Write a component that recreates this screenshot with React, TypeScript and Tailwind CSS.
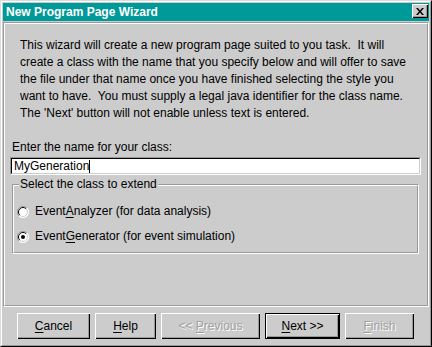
import type { ReactNode } from 'react'

const raised =
  'shadow-[inset_1px_1px_0_#ffffff,inset_-1px_-1px_0_#000000,inset_-2px_-2px_0_#999999]'

function Ul({ children }: { children: ReactNode }) {
  return <span className="underline underline-offset-[2px]">{children}</span>
}

function Radio({ checked }: { checked?: boolean }) {
  return (
    <svg width="12" height="12" viewBox="0 0 12 12" className="shrink-0">
      <circle cx="6" cy="6" r="5.5" fill="#ffffff" />
      <path d="M10 2 A5.5 5.5 0 0 0 2 10" fill="none" stroke="#999999" strokeWidth="1" />
      <path d="M9.2 2.8 A4.5 4.5 0 0 0 2.8 9.2" fill="none" stroke="#000000" strokeWidth="1" />
      <path d="M2 10 A5.5 5.5 0 0 0 10 2" fill="none" stroke="#ffffff" strokeWidth="1" />
      <path d="M2.8 9.2 A4.5 4.5 0 0 0 9.2 2.8" fill="none" stroke="#cccccc" strokeWidth="1" />
      {checked && <circle cx="6" cy="6" r="2" fill="#000000" />}
    </svg>
  )
}

function Button({
  children,
  width,
  disabled,
  isDefault,
}: {
  children: ReactNode
  width: string
  disabled?: boolean
  isDefault?: boolean
}) {
  return (
    <div
      className={`${width} h-[26px] ${isDefault ? 'border border-black' : ''} bg-[#cccccc]`}
    >
      <div
        className={`h-full w-full flex items-center justify-center ${raised} ${
          disabled ? 'text-[#a0a0a0] [text-shadow:1px_1px_0_#ffffff]' : 'text-black'
        }`}
      >
        {children}
      </div>
    </div>
  )
}

export default function App() {
  return (
    <div className="w-[432px] h-[347px] bg-[#cccccc] border border-t-[#dcdcdc] border-l-[#dcdcdc] border-r-black border-b-black font-['Liberation_Sans',Arial,sans-serif] text-[12px] leading-[17px] text-black">
      <div className="h-full flex flex-col border border-t-white border-l-white border-r-[#999999] border-b-[#999999] p-px">
        {/* title bar */}
        <div className="h-[18px] shrink-0 bg-[#009999] flex items-center justify-between pl-[3px] pr-px">
          <span className="text-white font-bold text-[12px]">New Program Page Wizard</span>
          <div className={`w-[16px] h-[14px] mb-[2px] bg-[#cccccc] flex items-center justify-center ${raised}`}>
            <svg width="8" height="7" viewBox="0 0 8 7">
              <path d="M0 0h2l2 2.5L6 0h2L5 3.5 8 7H6L4 4.5 2 7H0l3-3.5z" fill="#000000" />
            </svg>
          </div>
        </div>

        {/* main panel */}
        <div className="mt-px h-[285px] shrink-0 border border-t-[#999999] border-l-[#999999] border-r-white border-b-white">
          <div className="h-full border border-t-white border-l-white border-r-[#999999] border-b-[#999999] flex flex-col">
            <p className="mt-[13px] pl-[15px] whitespace-pre">
              {'This wizard will create a new program page suited to you task.  It will\n'}
              {'create a class with the name that you specify below and will offer to save\n'}
              {'the file under that name once you have finished selecting the style you\n'}
              {'want to have.  You must supply a legal java identifier for the class name.\n'}
              {"The 'Next' button will not enable unless text is entered."}
            </p>

            <div className="mt-[17px] pl-[7px]">Enter the name for your class:</div>

            <div className="mt-px ml-[5px] w-[411px] h-[18px] bg-white border border-t-[#999999] border-l-[#999999] border-r-white border-b-white">
              <div className="h-full border border-t-black border-l-black border-r-[#cccccc] border-b-[#cccccc] pl-[2px] flex items-center leading-[14px]">
                MyGeneration
                <span className="w-px h-[13px] bg-black" />
              </div>
            </div>

            {/* group box */}
            <div className="relative mt-[9px] ml-[7px] w-[407px] h-[70px] border border-t-[#999999] border-l-[#999999] border-r-white border-b-white">
              <div className="h-full border border-t-white border-l-white border-r-[#999999] border-b-[#999999] flex flex-col pt-[17px] pl-[3px] gap-[8px]">
                <div className="h-[17px] flex items-center gap-[6px]">
                  <Radio />
                  <span>
                    Event<Ul>A</Ul>nalyzer (for data analysis)
                  </span>
                </div>
                <div className="h-[17px] flex items-center gap-[6px]">
                  <Radio checked />
                  <span>
                    Event<Ul>G</Ul>enerator (for event simulation)
                  </span>
                </div>
              </div>
              <span className="absolute left-[6px] -top-[9px] px-[1px] bg-[#cccccc]">
                Select the class to extend
              </span>
            </div>
          </div>
        </div>

        {/* buttons */}
        <div className="mt-[6px] pl-[14px] flex gap-[5px]">
          <Button width="w-[73px]">
            <span>
              <Ul>C</Ul>ancel
            </span>
          </Button>
          <Button width="w-[61px]">
            <span>
              <Ul>H</Ul>elp
            </span>
          </Button>
          <Button width="w-[99px]" disabled>
            <span>
              {'<< '}
              <Ul>P</Ul>revious
            </span>
          </Button>
          <Button width="w-[75px]" isDefault>
            <span>
              <Ul>N</Ul>ext {'>>'}
            </span>
          </Button>
          <Button width="w-[69px]" disabled>
            <span>
              <Ul>F</Ul>inish
            </span>
          </Button>
        </div>
      </div>
    </div>
  )
}
